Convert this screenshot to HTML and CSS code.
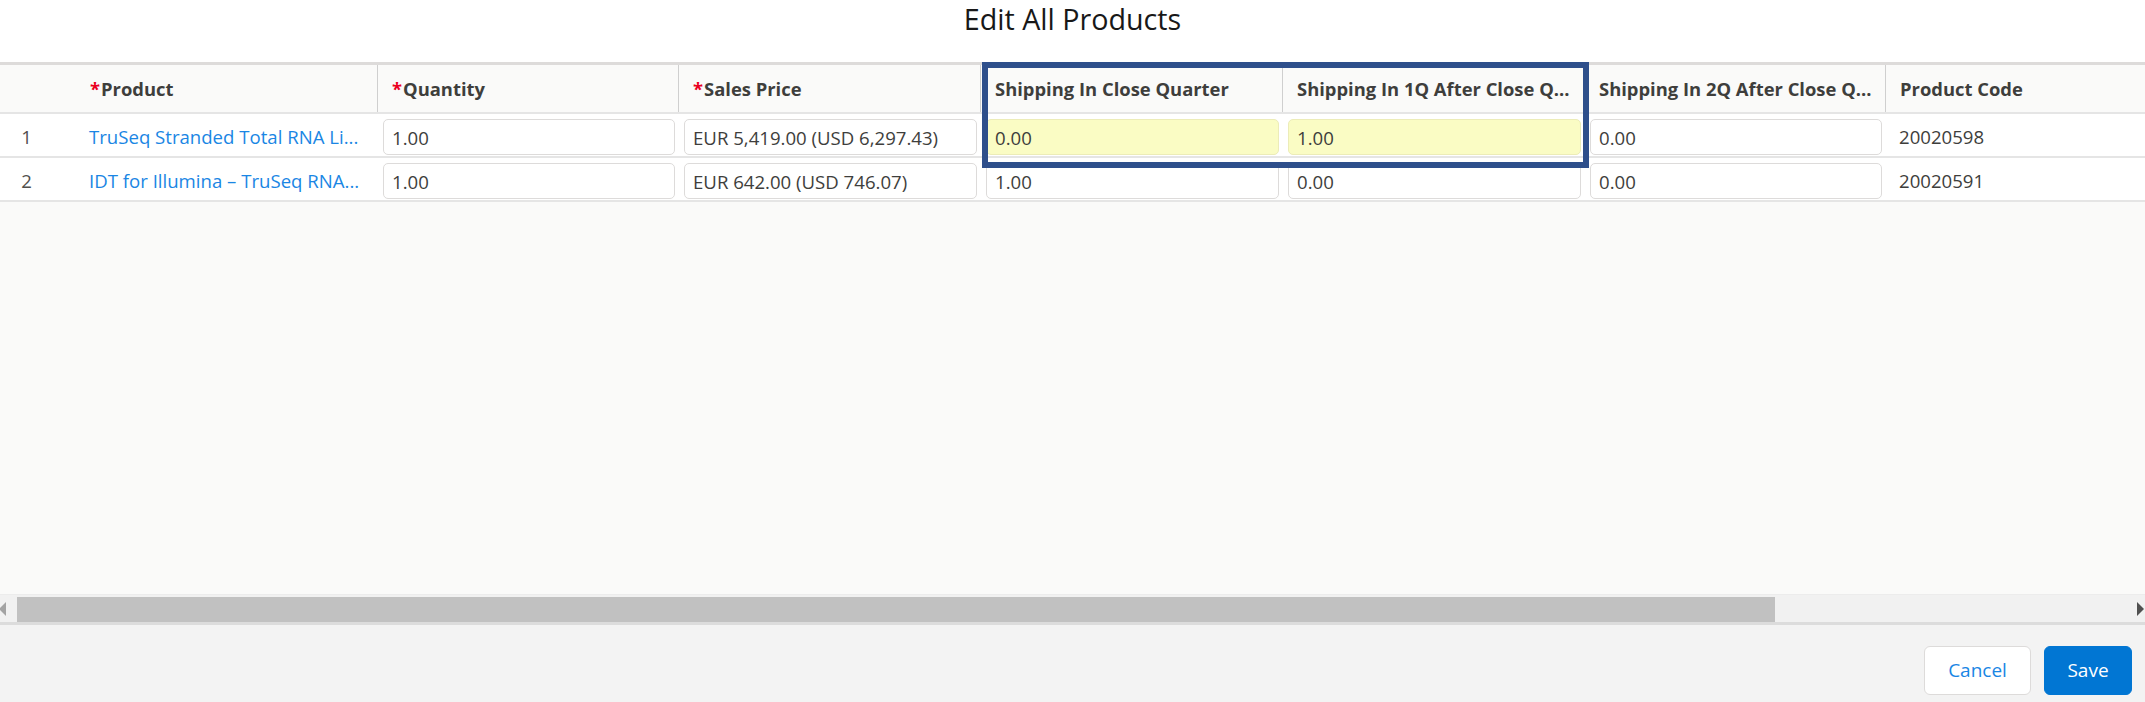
FILE: index.html
```html
<!DOCTYPE html>
<html lang="en">
<head>
<meta charset="utf-8">
<title>Edit All Products</title>
<link rel="stylesheet" href="styles.css">
</head>
<body>
<div class="modal">
  <header class="modal-title">Edit All Products</header>
  <section class="table-wrap">
    <div class="grid thead">
      <div class="th th-num"></div>
      <div class="th th-first"><span class="req">*</span>Product</div>
      <div class="th"><span class="req">*</span>Quantity</div>
      <div class="th"><span class="req">*</span>Sales Price</div>
      <div class="th">Shipping In Close Quarter</div>
      <div class="th">Shipping In 1Q After Close Q...</div>
      <div class="th">Shipping In 2Q After Close Q...</div>
      <div class="th">Product Code</div>
      <div class="th th-last"></div>
    </div>
    <div class="grid tr">
      <div class="td td-num">1</div>
      <div class="td td-link"><a class="link" href="#">TruSeq Stranded Total RNA Li...</a></div>
      <div class="td td-input"><div class="input">1.00</div></div>
      <div class="td td-input"><div class="input">EUR 5,419.00 (USD 6,297.43)</div></div>
      <div class="td td-input"><div class="input input-changed">0.00</div></div>
      <div class="td td-input"><div class="input input-changed">1.00</div></div>
      <div class="td td-input"><div class="input">0.00</div></div>
      <div class="td td-text">20020598</div>
      <div class="td"></div>
    </div>
    <div class="grid tr">
      <div class="td td-num">2</div>
      <div class="td td-link"><a class="link" href="#">IDT for Illumina – TruSeq RNA...</a></div>
      <div class="td td-input"><div class="input">1.00</div></div>
      <div class="td td-input"><div class="input">EUR 642.00 (USD 746.07)</div></div>
      <div class="td td-input"><div class="input">1.00</div></div>
      <div class="td td-input"><div class="input">0.00</div></div>
      <div class="td td-input"><div class="input">0.00</div></div>
      <div class="td td-text">20020591</div>
      <div class="td"></div>
    </div>
    <div class="table-space"></div>
    <div class="hscroll">
      <span class="arrow arrow-left"></span>
      <div class="thumb-track"><div class="thumb"></div></div>
      <span class="arrow arrow-right"></span>
    </div>
    <div class="highlight-box"></div>
  </section>
  <footer class="modal-footer">
    <button class="btn btn-neutral">Cancel</button>
    <button class="btn btn-brand">Save</button>
  </footer>
</div>
</body>
</html>
```

FILE: styles.css
```css
* { box-sizing: border-box; }

html, body {
  margin: 0;
  padding: 0;
  background: #ffffff;
}

body {
  font-family: "Open Sans", "Noto Sans", Arial, sans-serif;
  font-size: 18.6px;
  color: #3e3e3c;
}

.modal {
  width: 2145px;
  height: 702px;
  display: flex;
  flex-direction: column;
  overflow: hidden;
}

.modal-title {
  height: 62px;
  flex: 0 0 62px;
  padding-top: 1px;
  line-height: 36px;
  text-align: center;
  font-size: 28.7px;
  font-weight: 400;
  color: #181818;
  background: #ffffff;
}

.table-wrap {
  position: relative;
  flex: 1 1 auto;
  display: flex;
  flex-direction: column;
  background: #fafaf9;
  border-top: 3px solid #dddbda;
  border-bottom: 3px solid #dcdcdc;
}

.grid {
  display: grid;
  grid-template-columns: 78px 299px 301px 302px 302px 302px 301px 260px 1fr;
}

.thead {
  height: 49px;
  background: #fafaf9;
  border-bottom: 2px solid #e5e5e5;
}

.th {
  display: flex;
  align-items: center;
  padding-left: 14px;
  font-weight: 700;
  font-size: 18.4px;
  color: #3e3e3c;
  border-left: 1px solid #cfcfcf;
  white-space: nowrap;
  overflow: hidden;
}

.th-num, .th-first { border-left: none; }
.th-first { padding-left: 12px; }
.th-last { border-left: 1px solid transparent; }

.req {
  color: #ea001e;
  font-weight: 700;
  margin-right: 1px;
}

.tr {
  height: 44px;
  background: #ffffff;
  border-bottom: 2px solid #e5e5e5;
}

.td {
  display: flex;
  align-items: center;
  padding-top: 3px;
  white-space: nowrap;
  overflow: hidden;
}

.td-num {
  justify-content: flex-end;
  padding-right: 46px;
  color: #514f4d;
}

.td-link { padding-left: 11px; }

.link {
  color: #1a86e4;
  text-decoration: none;
}

.td-input { padding: 4px 3px 0 6px; }

.input {
  width: 100%;
  height: 36px;
  display: flex;
  align-items: center;
  padding-left: 8px;
  background: #ffffff;
  border: 1px solid #dddbda;
  border-radius: 5px;
  color: #3e3e3c;
}

.input-changed {
  background: #fafcc4;
  border-color: #ececb8;
}

.td-text {
  padding-left: 14px;
  color: #3e3e3c;
}

.table-space { flex: 1 1 auto; }

.hscroll {
  height: 28px;
  flex: 0 0 28px;
  display: flex;
  align-items: stretch;
  background: #f1f1f1;
  border-top: 1px solid #ececec;
}

.thumb-track {
  flex: 1 1 auto;
  padding: 2px 0 0 17px;
}

.thumb {
  width: 1758px;
  height: 100%;
  background: #c1c1c1;
}

.arrow {
  position: absolute;
  bottom: 6px;
  width: 0;
  height: 0;
  border-top: 7px solid transparent;
  border-bottom: 7px solid transparent;
}

.arrow-left {
  left: -1px;
  border-right: 7px solid #a3a3a3;
}

.arrow-right {
  right: 1px;
  border-left: 7px solid #505050;
}

.highlight-box {
  position: absolute;
  left: 982px;
  top: -3px;
  width: 607px;
  height: 106px;
  border: 6px solid #2e4f8b;
  pointer-events: none;
}

.modal-footer {
  flex: 0 0 77px;
  height: 77px;
  display: flex;
  align-items: center;
  justify-content: flex-end;
  gap: 13px;
  padding: 13px 13px 0 0;
  background: #f3f3f3;
}

.btn {
  height: 49px;
  border-radius: 6px;
  font-family: "Open Sans", "Noto Sans", Arial, sans-serif;
  font-size: 19px;
  cursor: pointer;
}

.btn-neutral {
  width: 107px;
  background: #ffffff;
  border: 1px solid #dddbda;
  color: #1a86e4;
}

.btn-brand {
  width: 88px;
  background: #0176d3;
  border: 1px solid #0176d3;
  color: #ffffff;
}
```
